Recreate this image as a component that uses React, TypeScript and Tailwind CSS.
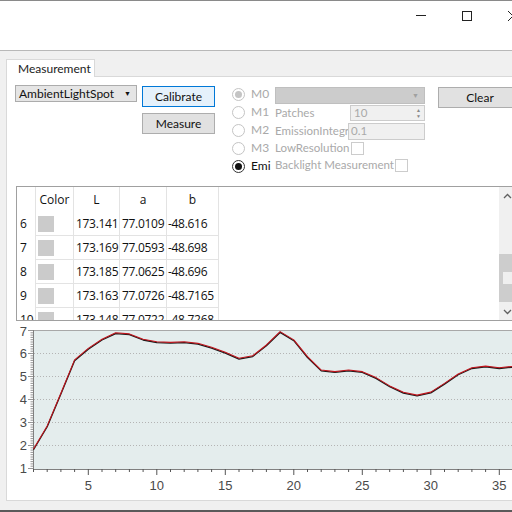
import React from "react";

const ui = { fontFamily: 'Lato, "Liberation Sans", sans-serif' };
const gridFont = { fontFamily: '"Open Sans", "Noto Sans", sans-serif' };

const rows = [
  { n: "6", L: "173.141", a: "77.0109", b: "-48.616" },
  { n: "7", L: "173.169", a: "77.0593", b: "-48.698" },
  { n: "8", L: "173.185", a: "77.0625", b: "-48.696" },
  { n: "9", L: "173.163", a: "77.0726", b: "-48.7165" },
  { n: "10", L: "173.148", a: "77.0722", b: "-48.7268" },
];

// chart data (index 1..36)
const series = [
  1.83, 2.83, 4.25, 5.7, 6.2, 6.6, 6.88, 6.83, 6.6, 6.49, 6.46, 6.49, 6.42, 6.25, 6.03, 5.77, 5.88, 6.35,
  6.93, 6.57, 5.84, 5.26, 5.19, 5.26, 5.19, 4.93, 4.57, 4.29, 4.17, 4.3, 4.68, 5.09, 5.36, 5.43, 5.36, 5.42,
];

const px = (k: number) => 33.5 + (k - 1) * 13.7;
const py = (v: number) => 330 + (7 - v) * 23;

function Radio({ label, checked, disabled }: { label: string; checked?: boolean; disabled?: boolean }) {
  const ring = disabled ? "border-[#c4c4c4]" : checked ? "border-[#333]" : "border-[#c4c4c4]";
  const dot = disabled ? "bg-[#c4c4c4]" : "bg-[#111]";
  return (
    <div className="flex h-[18px] items-center">
      <div className={`flex h-[13px] w-[13px] shrink-0 items-center justify-center rounded-full border bg-white ${ring}`}>
        {checked && <div className={`h-[7px] w-[7px] rounded-full ${dot}`} />}
      </div>
      <span className={`ml-[6px] text-[12px] leading-none ${disabled ? "text-[#a9a9a9]" : "text-[#111]"}`}>{label}</span>
    </div>
  );
}

function Chart() {
  const pts = series.map((v, i) => `${px(i + 1)},${py(v)}`).join(" ");
  const ptsB = series.map((v, i) => `${px(i + 1)},${py(v) + 0.8}`).join(" ");
  const minorY: number[] = [];
  for (let v = 1; v <= 7.001; v += 0.1) minorY.push(v);
  const xs: number[] = [];
  for (let k = 1; k <= 37; k++) xs.push(k);
  return (
    <svg width="524" height="179" viewBox="7 321 524 179" className="block">
      <rect x="7" y="321" width="524" height="179" fill="#ffffff" />
      <rect x="33.5" y="330" width="500" height="139" fill="#e4eded" />
      <line x1="33" y1="330.5" x2="531" y2="330.5" stroke="#a8a8a8" />
      {[2, 3, 4, 5, 6].map((v) => (
        <line key={v} x1="34" y1={py(v) + 0.5} x2="531" y2={py(v) + 0.5} stroke="#b4b4b4" strokeDasharray="1 2" />
      ))}
      {minorY.map((v, i) => (
        <line key={i} x1={i % 10 === 0 ? 28 : 30.5} y1={py(v) + 0.5} x2="33" y2={py(v) + 0.5} stroke="#7a7a7a" strokeWidth="0.8" />
      ))}
      <line x1="33.5" y1="330" x2="33.5" y2="469" stroke="#808080" />
      <line x1="33" y1="469.5" x2="531" y2="469.5" stroke="#808080" />
      {xs.map((k) => (
        <line key={k} x1={px(k)} y1="469" x2={px(k)} y2={k % 5 === 0 ? 475 : 472} stroke="#555" strokeWidth="1" />
      ))}
      {[1, 2, 3, 4, 5, 6, 7].map((v) => (
        <text key={v} x="27" y={py(v) + (v === 7 ? 6 : 5)} textAnchor="end" fontSize="13" fill="#4a4a4a" fontFamily="Liberation Sans, sans-serif">
          {v}
        </text>
      ))}
      {[5, 10, 15, 20, 25, 30, 35].map((k) => (
        <text key={k} x={px(k)} y="490" textAnchor="middle" fontSize="13" fill="#4a4a4a" fontFamily="Liberation Sans, sans-serif">
          {k}
        </text>
      ))}
      <polyline points={ptsB} fill="none" stroke="#1a1a1a" strokeWidth="1.3" strokeLinejoin="round" />
      <polyline points={pts} fill="none" stroke="#c0141c" strokeWidth="1.1" strokeLinejoin="round" />
    </svg>
  );
}

export default function App() {
  return (
    <div className="h-[512px] w-[512px] overflow-hidden bg-white" style={ui}>
      <div className="flex h-[512px] w-[536px] flex-col">
        {/* title bar */}
        <div className="flex h-[51px] justify-end border-t border-b border-t-[#8a8a8a] border-b-[#b8b8b8] bg-white">
          <div className="flex h-[29px] w-[46px] items-center justify-center">
            <div className="h-px w-[10px] bg-[#222]" />
          </div>
          <div className="flex h-[29px] w-[46px] items-center justify-center">
            <div className="h-[10px] w-[10px] border border-[#222]" />
          </div>
          <div className="flex h-[29px] w-[46px] items-center justify-center">
            <svg width="10" height="10" viewBox="0 0 10 10">
              <path d="M0 0L10 10M10 0L0 10" stroke="#222" strokeWidth="1" />
            </svg>
          </div>
        </div>

        {/* client */}
        <div className="flex flex-1 flex-col bg-[#f0f0f0] pl-[6px] pt-[8px]">
          <div className="relative z-10 -mb-px flex h-[18px] w-[89px] items-center border border-b-0 border-[#d9d9d9] bg-white pl-[11px] text-[12px] leading-none text-[#222]">
            Measurement
          </div>
          <div className="flex h-[425px] w-[524px] flex-col border border-[#d9d9d9] bg-white">
            {/* controls */}
            <div className="flex h-[109px] items-start pl-[8px] pt-[8px]">
              <div className="flex h-[17px] w-[122px] items-center justify-between border border-[#acacac] bg-[#e5e5e5] pl-[3px] pr-[5px] text-[12px] leading-none text-[#111]">
                <span>AmbientLightSpot</span>
                <span className="text-[7px]">▼</span>
              </div>
              <div className="ml-[5px] flex w-[73px] flex-col">
                <div className="mt-px flex h-[21px] items-center justify-center border border-[#0078d7] bg-[#e5f1fb] text-[12px] leading-none text-[#111]">
                  Calibrate
                </div>
                <div className="mt-[6px] flex h-[21px] items-center justify-center border border-[#adadad] bg-[#e1e1e1] text-[12px] leading-none text-[#111]">
                  Measure
                </div>
              </div>
              <div className="ml-[17px] flex w-[43px] flex-col overflow-hidden whitespace-nowrap">
                <Radio label="M0" checked disabled />
                <Radio label="M1" disabled />
                <Radio label="M2" disabled />
                <Radio label="M3" disabled />
                <Radio label="Emi" checked />
              </div>
              <div className="flex w-[150px] flex-col text-[11.5px] leading-none text-[#a9a9a9]">
                <div className="mt-[2px] flex h-[17px] items-center justify-end border border-[#bfbfbf] bg-[#cccccc] pr-[5px]">
                  <span className="text-[7px] text-[#a0a0a0]">▼</span>
                </div>
                <div className="flex h-[18px] items-center">
                  <span className="w-[75px]">Patches</span>
                  <div className="flex h-[16px] flex-1 items-center justify-between border border-[#cccccc] bg-[#f0f0f0] pl-[3px]">
                    <span>10</span>
                    <div className="flex h-full w-[11px] flex-col items-center justify-center text-[5px] leading-[6px] text-[#888]">
                      <span>▲</span>
                      <span>▼</span>
                    </div>
                  </div>
                </div>
                <div className="flex h-[18px] items-center">
                  <span className="w-[73px] overflow-hidden whitespace-nowrap">EmissionIntegr</span>
                  <div className="flex h-[17px] flex-1 items-center border border-[#cccccc] bg-[#f0f0f0] pl-[2px]">0.1</div>
                </div>
                <div className="flex h-[16px] items-center">
                  <span className="whitespace-nowrap pr-[2px]">LowResolution</span>
                  <div className="h-[13px] w-[13px] shrink-0 border border-[#cccccc] bg-white" />
                </div>
                <div className="flex h-[18px] items-center">
                  <span className="whitespace-nowrap pr-px">Backlight Measurement</span>
                  <div className="h-[13px] w-[13px] shrink-0 border border-[#cccccc] bg-white" />
                </div>
              </div>
              <div className="ml-[13px] mt-[2px] flex h-[21px] w-[84px] items-center justify-center border border-[#adadad] bg-[#e1e1e1] text-[12px] leading-none text-[#111]">
                Clear
              </div>
            </div>

            {/* grid */}
            <div className="ml-[9px] flex h-[135px] w-[501px] border border-[#a0a0a0] bg-white" style={gridFont}>
              <div className="flex-1 overflow-hidden text-[12px] leading-none text-[#111]">
                <div className="flex h-[25px]">
                  <div className="w-[19px] border-r border-[#e3e3e3]" />
                  <div className="flex w-[38px] items-center justify-center border-r border-[#e3e3e3]">Color</div>
                  <div className="flex w-[46px] items-center justify-center border-r border-[#e3e3e3]">L</div>
                  <div className="flex w-[47px] items-center justify-center border-r border-[#e3e3e3]">a</div>
                  <div className="flex w-[52px] items-center justify-center border-r border-[#e3e3e3]">b</div>
                </div>
                {rows.map((r) => (
                  <div key={r.n} className="flex h-[24px]">
                    <div className="flex w-[19px] items-center border-r border-[#e3e3e3] pl-[3px]">{r.n}</div>
                    <div className="flex w-[38px] items-center border-r border-b border-[#e3e3e3] pl-[2px]">
                      <div className="h-[16px] w-[16px] bg-[#cbcbcb]" />
                    </div>
                    <div className="flex w-[46px] items-center overflow-hidden whitespace-nowrap border-r border-b border-[#e3e3e3] pl-[2px] tracking-[-0.3px]">{r.L}</div>
                    <div className="flex w-[47px] items-center overflow-hidden whitespace-nowrap border-r border-b border-[#e3e3e3] pl-[2px] tracking-[-0.3px]">{r.a}</div>
                    <div className="flex w-[52px] items-center overflow-hidden whitespace-nowrap border-r border-b border-[#e3e3e3] pl-[1px] tracking-[-0.3px]">{r.b}</div>
                  </div>
                ))}
              </div>
              {/* vertical scrollbar */}
              <div className="flex w-[17px] flex-col bg-[#f0f0f0]">
                <div className="flex h-[17px] items-center justify-center">
                  <svg width="9" height="6" viewBox="0 0 9 6">
                    <path d="M1 5L4.5 1.5L8 5" fill="none" stroke="#606060" strokeWidth="1.3" />
                  </svg>
                </div>
                <div className="flex-1 pt-[50px]">
                  <div className="flex h-[48px] items-center justify-center bg-[#cdcdcd]">
                    <div className="h-[12px] w-[9px] bg-[#efefef]" />
                  </div>
                </div>
                <div className="flex h-[17px] items-center justify-center">
                  <svg width="9" height="6" viewBox="0 0 9 6">
                    <path d="M1 1L4.5 4.5L8 1" fill="none" stroke="#606060" strokeWidth="1.3" />
                  </svg>
                </div>
              </div>
            </div>

            {/* chart */}
            <Chart />
          </div>
        </div>
        <div className="h-[2px] bg-[#5a5a5a]" />
      </div>
    </div>
  );
}
